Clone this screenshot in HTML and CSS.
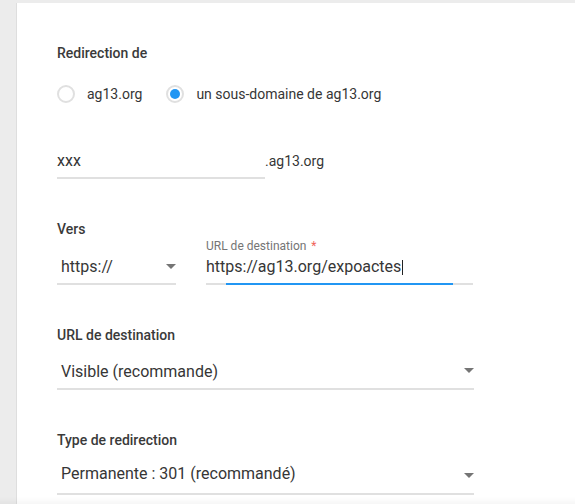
FILE: index.html
```html
<!DOCTYPE html>
<html lang="fr">
<head>
<meta charset="utf-8">
<title>Redirection</title>
<link rel="stylesheet" href="styles.css">
</head>
<body>
<div class="card">
  <section class="group group-from">
    <div class="label">Redirection de</div>
    <div class="radios">
      <label class="radio"><span class="circle"></span><span class="radio-text">ag13.org</span></label>
      <label class="radio checked"><span class="circle"></span><span class="radio-text">un sous-domaine de ag13.org</span></label>
    </div>
    <div class="domain-row">
      <div class="field field-sub"><span class="value">xxx</span></div>
      <span class="suffix">.ag13.org</span>
    </div>
  </section>

  <section class="group">
    <div class="label">Vers</div>
    <div class="to-row">
      <div class="select select-proto">
        <span class="select-value">https://</span>
        <span class="arrow"></span>
      </div>
      <div class="field field-url focused">
        <div class="float-label">URL de destination<span class="req">*</span></div>
        <span class="value">https://ag13.org/expoactes<span class="caret"></span></span>
      </div>
    </div>
  </section>

  <section class="group">
    <div class="label">URL de destination</div>
    <div class="select select-full">
      <span class="select-value">Visible (recommande)</span>
      <span class="arrow"></span>
    </div>
  </section>

  <section class="group group-last">
    <div class="label">Type de redirection</div>
    <div class="select select-full select-type">
      <span class="select-value">Permanente : 301 (recommandé)</span>
      <span class="arrow"></span>
    </div>
  </section>
</div>
<div class="footer-shadow"></div>
</body>
</html>
```

FILE: styles.css
```css
html, body {
  margin: 0;
  padding: 0;
}

body {
  background: #ececec;
  font-family: Roboto, "Liberation Sans", Arial, sans-serif;
  color: #363636;
  height: 504px;
  overflow: hidden;
}

.card {
  margin: 3px 0 0 17px;
  height: 501px;
  background: #fff;
  box-shadow: -1px 0 0 rgba(0, 0, 0, 0.06);
  padding: 40px 0 0 40px;
  box-sizing: border-box;
  overflow: hidden;
}

.group {
  display: flex;
  flex-direction: column;
  align-items: flex-start;
  margin-bottom: 40px;
}

.group-last {
  margin-bottom: 0;
}

.label {
  font-size: 14px;
  line-height: 20px;
  font-weight: 500;
  color: #3a3a3a;
}

.radios {
  display: flex;
  align-items: center;
  gap: 24px;
  margin-top: 21px;
  height: 20px;
}

.radio {
  display: flex;
  align-items: center;
  gap: 12px;
  font-size: 14px;
  line-height: 20px;
  color: #363636;
}

.circle {
  width: 18px;
  height: 18px;
  box-sizing: border-box;
  border: 2px solid #e0e0e0;
  border-radius: 50%;
  display: flex;
  align-items: center;
  justify-content: center;
}

.radio.checked .circle::before {
  content: "";
  width: 10px;
  height: 10px;
  border-radius: 50%;
  background: #2196f3;
}

.domain-row {
  display: flex;
  align-items: baseline;
  margin-top: 47px;
}

.field {
  display: flex;
  flex-direction: column;
  border-bottom: 2px solid #e0e0e0;
  padding-bottom: 6px;
  position: relative;
}

.value {
  font-size: 16px;
  line-height: 20px;
  color: #363636;
}

.field-sub {
  width: 208px;
}

.suffix {
  font-size: 14px;
  line-height: 20px;
  color: #363636;
}

.to-row {
  display: flex;
  align-items: flex-end;
  gap: 30px;
}

.field-url {
  width: 267px;
}

.float-label {
  font-size: 12px;
  line-height: 14px;
  color: #757575;
  margin-bottom: 4px;
}

.req {
  color: #f0645a;
  margin-left: 5px;
}

.caret {
  display: inline-block;
  width: 1px;
  height: 15px;
  background: #222;
  vertical-align: -3px;
  margin-left: 1px;
}

.field-url.focused::after {
  content: "";
  position: absolute;
  left: 20px;
  right: 20px;
  bottom: -2px;
  height: 2px;
  background: #2196f3;
}

.select {
  display: flex;
  justify-content: space-between;
  border-bottom: 2px solid #e0e0e0;
  box-sizing: border-box;
}

.select-value {
  font-size: 16px;
  line-height: 20px;
  color: #363636;
  padding: 0 0 6px 4px;
}

.arrow {
  align-self: flex-end;
  width: 0;
  height: 0;
  border-left: 5px solid transparent;
  border-right: 5px solid transparent;
  border-top: 5px solid #757575;
  margin-bottom: 14px;
}

.select-proto {
  width: 119px;
}

.select-full {
  width: 417px;
  margin-top: 17px;
}

.select-full .arrow {
  margin-bottom: 15px;
}

.select-type {
  margin-top: 14px;
}

.select-type .select-value {
  padding-bottom: 9px;
}

.footer-shadow {
  position: fixed;
  left: 0;
  right: 0;
  bottom: 0;
  height: 7px;
  background: linear-gradient(to bottom, rgba(0, 0, 0, 0), rgba(0, 0, 0, 0.035));
}
```
